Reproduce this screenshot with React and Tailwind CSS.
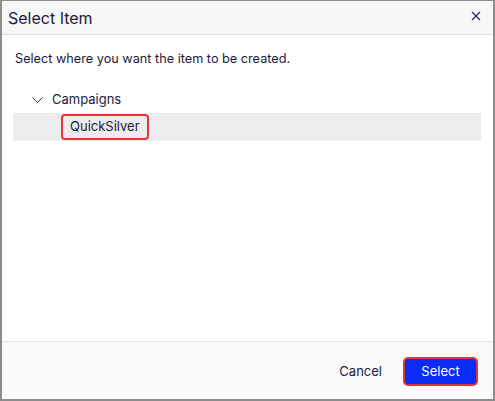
import React from "react";

const App = () => {
  return (
    <div
      className="w-[495px] h-[401px] flex flex-col bg-white border-[#8c8c8c] border-t border-l-2 border-r-2 border-b-2 text-[#1b1b3a]"
      style={{ fontFamily: "Inter, 'Noto Sans', sans-serif" }}
    >
      {/* header */}
      <div className="h-[34px] flex items-center justify-between bg-[#f7f7f7] border-b border-[#dcdcdc] pl-[6px] pr-[12px]">
        <h1 className="text-[16px] leading-none">Select Item</h1>
        <svg width="10" height="10" viewBox="0 0 10 10" className="mt-[-4px]">
          <path d="M1 1 L9 9 M9 1 L1 9" stroke="#2a2a4a" strokeWidth="1.2" fill="none" />
        </svg>
      </div>

      {/* body */}
      <div className="flex-1 pt-[15px] px-[11px]">
        <p className="text-[12.7px] leading-[18px] pl-[2px]">Select where you want the item to be created.</p>
        <div className="mt-[22px]">
          <div className="flex items-center h-[20px] pl-[19px]">
            <svg width="11" height="7" viewBox="0 0 11 7">
              <path d="M0.5 0.5 L5.5 5.5 L10.5 0.5" stroke="#2a2a4a" strokeWidth="1" fill="none" />
            </svg>
            <span className="ml-[9px] text-[13px]">Campaigns</span>
          </div>
          <div className="mt-[3px] h-[28px] bg-[#ececec] flex items-center pl-[48px] mr-[1px]">
            <span className="border-2 border-[#e0353d] rounded-[4px] px-[7px] h-[26px] flex items-center text-[13px]">
              QuickSilver
            </span>
          </div>
        </div>
      </div>

      {/* footer */}
      <div className="h-[58px] bg-[#fafafa] border-t border-[#e2e2e2] flex items-center justify-end pr-[15px] pt-[2px] gap-[21px]">
        <button className="text-[13px] text-[#1b1b3a]">Cancel</button>
        <button className="w-[75px] h-[29px] bg-[#0a2cf5] text-white text-[13px] rounded-[5px] border-2 border-[#e0353d]">
          Select
        </button>
      </div>
    </div>
  );
};

export default App;
